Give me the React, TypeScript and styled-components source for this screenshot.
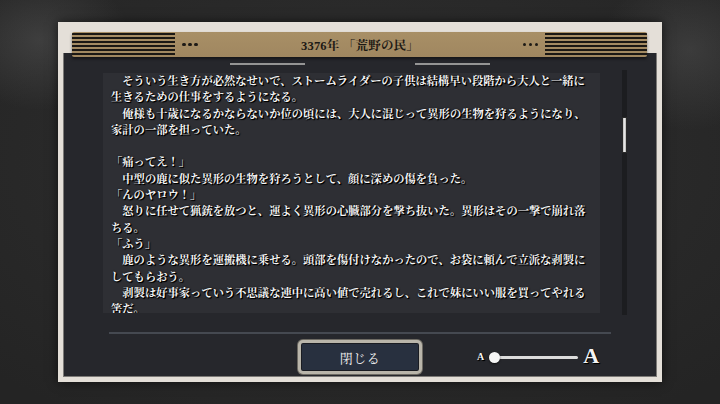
import React from "react";
import styled, { createGlobalStyle } from "styled-components";

const GlobalStyle = createGlobalStyle`
  html, body {
    margin: 0;
    padding: 0;
    width: 720px;
    height: 404px;
    overflow: hidden;
    background: #262626;
  }
  #root {
    width: 720px;
    height: 404px;
  }
`;

const Screen = styled.div`
  width: 720px;
  height: 404px;
  display: flex;
  align-items: center;
  justify-content: center;
  background:
    radial-gradient(ellipse 90px 70px at 40px 40px, rgba(90, 90, 90, 0.45), rgba(90, 90, 90, 0) 100%),
    radial-gradient(ellipse 90px 80px at 690px 50px, rgba(90, 90, 90, 0.4), rgba(90, 90, 90, 0) 100%),
    radial-gradient(ellipse 520px 300px at 50% 40%, #303030, #242424 100%);
`;

const Frame = styled.div`
  box-sizing: border-box;
  width: 604px;
  height: 360px;
  padding: 10px 5px 5px 5px;
  background: #e4dfd8;
  box-shadow: 0 0 10px rgba(0, 0, 0, 0.6);
  display: flex;
  flex-direction: column;
`;

const Header = styled.div`
  position: relative;
  z-index: 1;
  height: 25px;
  margin: 0 10px -4px 9px;
  background: linear-gradient(to bottom, #a88f66, #a08760);
  border-radius: 2px;
  box-shadow: 0 2px 3px rgba(0, 0, 0, 0.45);
  display: flex;
  align-items: center;
`;

const Stripes = styled.div<{ $w: number; $side: "left" | "right" }>`
  width: ${(p) => p.$w}px;
  height: 25px;
  border-radius: ${(p) => (p.$side === "left" ? "2px 0 0 2px" : "0 2px 2px 0")};
  background: repeating-linear-gradient(
    to bottom,
    transparent 0px,
    transparent 1px,
    #1b1814 1px,
    #1b1814 3px,
    transparent 3px,
    transparent 4.1px
  );
`;

const Dots = styled.div<{ $ml: number; $mr: number }>`
  display: flex;
  gap: 2.5px;
  margin-left: ${(p) => p.$ml}px;
  margin-right: ${(p) => p.$mr}px;
`;

const Dot = styled.span`
  width: 3.5px;
  height: 3.5px;
  border-radius: 50%;
  background: #1d1a16;
`;

const Title = styled.div`
  flex: 1;
  text-align: center;
  font-family: "Liberation Serif", "Noto Serif CJK JP", "Noto Sans CJK JP", serif;
  font-size: 12.5px;
  font-weight: 700;
  color: #1c1915;
  letter-spacing: 0.2px;
  padding-top: 1px;
`;

const Panel = styled.div`
  box-sizing: border-box;
  flex: 1;
  background: #26272c;
  border: 1px solid #7c7a77;
  border-top: none;
  display: flex;
  flex-direction: column;
  padding-top: 10px;
`;

const DecoRow = styled.div`
  display: flex;
  justify-content: center;
  gap: 110px;
  height: 2px;
`;

const DecoLine = styled.span`
  width: 75px;
  height: 1.5px;
  background: #959595;
`;

const BodyRow = styled.div`
  display: flex;
  align-items: flex-start;
  margin-top: 8px;
  padding-left: 39px;
`;

const TextBox = styled.div`
  box-sizing: border-box;
  width: 497px;
  height: 240px;
  background: #2e2f34;
  padding: 0 0 0 8px;
  overflow: hidden;
`;

const Story = styled.div`
  margin: -1px 0 0 0;
  white-space: pre;
  font-family: "Noto Serif CJK JP", "Noto Sans CJK JP", sans-serif;
  font-size: 11.3px;
  line-height: 16.3px;
  font-weight: 700;
  color: #f6f6f6;
  text-shadow: 1px 1px 1px #000, 1px 1px 0 #000, 0 0 2px rgba(0, 0, 0, 0.8);
`;

const Track = styled.div`
  position: relative;
  width: 5px;
  height: 245px;
  margin-top: -3px;
  margin-left: 22px;
  background: #1c1d20;
`;

const Thumb = styled.div`
  position: absolute;
  left: 0;
  width: 5px;
  height: 36px;
  box-sizing: border-box;
  border: 1px solid #2a2a2a;
  background: linear-gradient(to right, #bdbdbd, #e6e6e6 50%, #b4b4b4);
`;

const Separator = styled.div`
  height: 2px;
  width: 502px;
  margin: 17px 0 0 45px;
  background: #454951;
`;

const Footer = styled.div`
  display: grid;
  grid-template-columns: 1fr auto 1fr;
  align-items: center;
  margin-top: 6px;
`;

const CloseButton = styled.button`
  grid-column: 2;
  box-sizing: border-box;
  width: 124px;
  height: 34px;
  padding: 0;
  border-radius: 5px;
  border: 3px solid #b9b5aa;
  box-shadow: inset 0 0 0 1px #1a1c22, 0 0 0 1px #6d6a63;
  background: #28303f;
  color: #f2f2f2;
  font-family: "Noto Serif CJK JP", "Noto Sans CJK JP", sans-serif;
  font-size: 13px;
  letter-spacing: 0.5px;
  cursor: pointer;
`;

const SizeControl = styled.div`
  grid-column: 3;
  display: flex;
  align-items: center;
  margin-left: 55px;
`;

const SizeLetter = styled.span<{ $size: number; $lift: number }>`
  font-family: "Liberation Serif", serif;
  font-weight: 700;
  font-size: ${(p) => p.$size}px;
  line-height: 1;
  margin-top: ${(p) => -p.$lift * 2}px;
  color: #f4f4f4;
  text-shadow: 1px 1px 1px #000, 1px 1px 0 #000;
`;

const SliderTrack = styled.div`
  position: relative;
  width: 84px;
  height: 3px;
  margin: 0 5px 0 10px;
  border-radius: 2px;
  background: #dcdcdc;
`;

const Knob = styled.span`
  position: absolute;
  left: -5.5px;
  top: -4px;
  width: 11px;
  height: 11px;
  border-radius: 50%;
  background: #f6f6f6;
  box-shadow: 0 1px 2px rgba(0, 0, 0, 0.6);
`;

const storyLines = [
  "　そういう生き方が必然なせいで、ストームライダーの子供は結構早い段階から大人と一緒に",
  "生きるための仕事をするようになる。",
  "　俺様も十歳になるかならないか位の頃には、大人に混じって異形の生物を狩るようになり、",
  "家計の一部を担っていた。",
  "",
  "「痛ってえ！」",
  "　中型の鹿に似た異形の生物を狩ろうとして、顔に深めの傷を負った。",
  "「んのヤロウ！」",
  "　怒りに任せて猟銃を放つと、運よく異形の心臓部分を撃ち抜いた。異形はその一撃で崩れ落",
  "ちる。",
  "「ふう」",
  "　鹿のような異形を運搬機に乗せる。頭部を傷付けなかったので、お袋に頼んで立派な剥製に",
  "してもらおう。",
  "　剥製は好事家っていう不思議な連中に高い値で売れるし、これで妹にいい服を買ってやれる",
  "筈だ。",
];

export default function App() {
  const thumbTop = 47;
  return (
    <>
      <GlobalStyle />
      <Screen>
        <Frame>
          <Header>
            <Stripes $w={103} $side="left" />
            <Dots $ml={7} $mr={0}>
              <Dot />
              <Dot />
              <Dot />
            </Dots>
            <Title>3376年 「荒野の民」</Title>
            <Dots $ml={0} $mr={7}>
              <Dot />
              <Dot />
              <Dot />
            </Dots>
            <Stripes $w={102} $side="right" />
          </Header>
          <Panel>
            <DecoRow>
              <DecoLine />
              <DecoLine />
            </DecoRow>
            <BodyRow>
              <TextBox>
                <Story>{storyLines.join("\n")}</Story>
              </TextBox>
              <Track>
                <Thumb style={{ top: thumbTop }} />
              </Track>
            </BodyRow>
            <Separator />
            <Footer>
              <CloseButton>閉じる</CloseButton>
              <SizeControl>
                <SizeLetter $size={10} $lift={0}>A</SizeLetter>
                <SliderTrack>
                  <Knob />
                </SliderTrack>
                <SizeLetter $size={22} $lift={1}>A</SizeLetter>
              </SizeControl>
            </Footer>
          </Panel>
        </Frame>
      </Screen>
    </>
  );
}
